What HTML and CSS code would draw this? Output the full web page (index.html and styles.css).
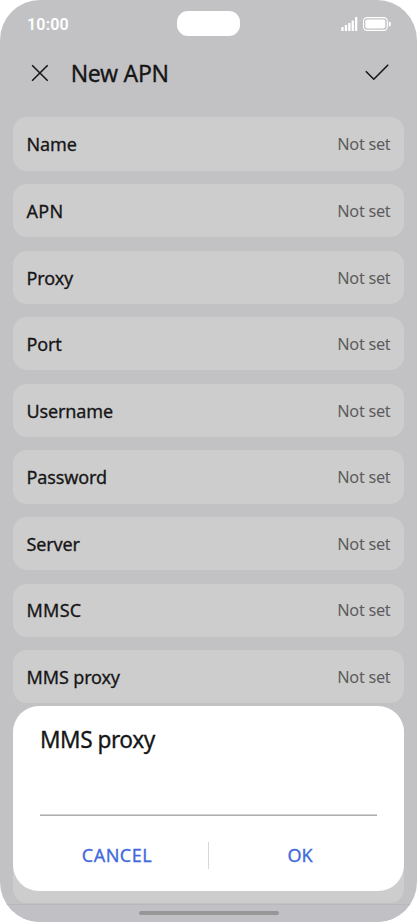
FILE: index.html
```html
<!DOCTYPE html>
<html lang="en">
<head>
<meta charset="utf-8">
<title>New APN</title>
<link rel="stylesheet" href="styles.css">
</head>
<body>
<div class="phone">
  <header class="status">
    <span class="time">10:00</span>
    <span class="island"></span>
    <svg class="indicators" width="50" height="16" viewBox="0 0 50 16">
      <g fill="#fff">
        <rect x="0.3" y="11" width="2.3" height="4" rx=".5"/>
        <rect x="3.8" y="9" width="2.3" height="6" rx=".5"/>
        <rect x="7.2" y="7" width="2.3" height="8" rx=".5"/>
        <rect x="10.6" y="4.5" width="2.3" height="10.5" rx=".5"/>
        <rect x="14" y="1" width="2.3" height="14" rx=".5"/>
        <rect x="24.3" y="3.6" width="20" height="8.8" rx="1.8"/>
        <path d="M47.8 5.8h.8q1.2 0 1.2 1.2v2q0 1.2-1.2 1.2h-.8z"/>
      </g>
      <rect x="22.5" y="1.6" width="23.8" height="12.8" rx="3.6" fill="none" stroke="#fff" stroke-width="1.1"/>
    </svg>
  </header>
  <div class="toolbar">
    <svg class="close" width="18" height="18" viewBox="0 0 18 18"><path d="M1.1 1.3 16.7 16.7M16.7 1.3 1.1 16.7"/></svg>
    <h1 class="title">New APN</h1>
    <svg class="check" width="24" height="18" viewBox="0 0 24 18"><path d="M.8 7.3 8.8 15.2 23.2 .7"/></svg>
  </div>
  <main class="list">
    <div class="row"><span class="label name">Name</span><span class="value">Not set</span></div>
    <div class="row"><span class="label apn">APN</span><span class="value">Not set</span></div>
    <div class="row"><span class="label proxy">Proxy</span><span class="value">Not set</span></div>
    <div class="row"><span class="label port">Port</span><span class="value">Not set</span></div>
    <div class="row"><span class="label username">Username</span><span class="value">Not set</span></div>
    <div class="row"><span class="label password">Password</span><span class="value">Not set</span></div>
    <div class="row"><span class="label server">Server</span><span class="value">Not set</span></div>
    <div class="row"><span class="label mmsc">MMSC</span><span class="value">Not set</span></div>
    <div class="row"><span class="label mms-proxy">MMS proxy</span><span class="value">Not set</span></div>
    <div class="row"></div>
    <div class="row"></div>
    <div class="row"></div>
  </main>
  <footer class="navbar"><span class="handle"></span></footer>
  <section class="dialog">
    <h2 class="dialog-title">MMS proxy</h2>
    <div class="field"></div>
    <div class="actions">
      <button class="action cancel">CANCEL</button>
      <span class="divider"></span>
      <button class="action ok">OK</button>
    </div>
  </section>
</div>
</body>
</html>
```

FILE: styles.css
```css
* { box-sizing: border-box; }
body {
  margin: 0;
  background: #fff;
  font-family: "Noto Sans", "Open Sans", sans-serif;
  color: #161617;
}
.phone {
  position: relative;
  width: 417px;
  height: 922px;
  display: flex;
  flex-direction: column;
  overflow: hidden;
  border-radius: 40px;
  background: #c2c2c4;
}
.status {
  height: 48px;
  padding: 0 26px 0 27px;
  display: grid;
  grid-template-columns: 150.2px 63px 1fr;
  align-items: center;
}
.time { padding-top: 1px; color: #fff; font: 600 16px/20px Roboto, sans-serif; letter-spacing: .2px; }
.island { height: 25px; margin-bottom: 1px; border-radius: 11px; background: #fff; }
.indicators { justify-self: end; }
.toolbar {
  height: 50px;
  padding: 0 28px 0 31px;
  display: flex;
  align-items: center;
}
.close, .check { fill: none; stroke: #161617; stroke-width: 1.6; }
.title, .label, .dialog-title, .action { font-weight: 400; -webkit-text-stroke: .3px currentColor; }
.title { margin: 0 auto 0 21.7px; font-size: 23px; line-height: 30px; letter-spacing: -.3px; }
.list {
  height: 806px;
  flex: none;
  padding: 19.4px 13.3px 0;
  display: flex;
  flex-direction: column;
  gap: 13.3px;
}
.row {
  flex: 0 0 53.3px;
  padding: .6px 13.3px 0;
  display: flex;
  align-items: center;
  justify-content: space-between;
  border-radius: 14px;
  background: #cdcdcd;
}
.label { font-size: 18px; line-height: 24px; letter-spacing: -.15px; }
.apn, .mmsc { letter-spacing: .2px; }
.value { font-size: 16.3px; line-height: 24px; color: #5c5c5c; letter-spacing: -.3px; }
.navbar {
  flex: 1;
  display: flex;
  justify-content: center;
  padding-top: 6px;
  border-top: 1px solid #b9b9bb;
  background: #c1c0c5;
}
.handle { width: 140px; height: 4px; border-radius: 2px; background: #979797; }
.dialog {
  position: absolute;
  left: 13.3px;
  right: 13.3px;
  bottom: 31px;
  height: 185px;
  padding: 18px 26.7px 0;
  border-radius: 26px;
  background: #fff;
}
.dialog-title { margin: 0; font-size: 22.7px; line-height: 32px; letter-spacing: -.5px; }
.field {
  height: 60px;
  background: linear-gradient(#d0d0d0 50%, #adadad 50%) bottom / 100% 2px no-repeat;
}
.actions { display: flex; align-items: center; padding-top: 26px; }
.action {
  flex: 1;
  padding: 0;
  border: 0;
  background: none;
  color: #4169dc;
  font-family: inherit;
  font-size: 18px;
  line-height: 27px;
  letter-spacing: .5px;
}
.cancel { padding-right: 14px; }
.ok { padding-left: 14px; letter-spacing: -.2px; }
.divider { width: 1px; height: 27px; background: #d8d8d8; }
```
